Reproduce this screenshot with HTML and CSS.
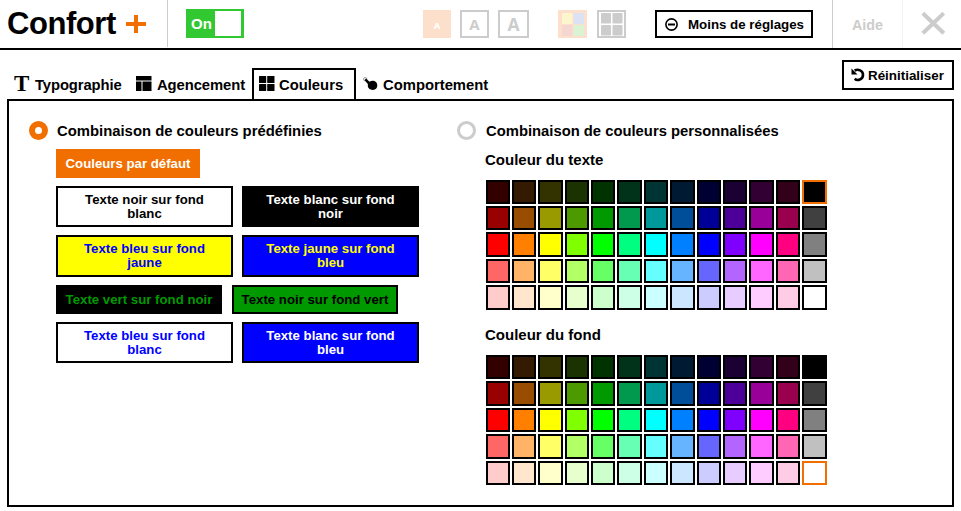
FILE: index.html
```html
<!DOCTYPE html>
<html lang="fr">
<head>
<meta charset="utf-8">
<title>Confort +</title>
<link rel="stylesheet" href="styles.css">
</head>
<body>
<header class="toolbar">
  <div class="brand"><span class="brand-name">Confort</span>
    <svg class="plus" width="20" height="19" viewBox="0 0 20 19"><path d="M0 9h20M10 0v18" stroke="#f16e00" stroke-width="4"/></svg>
  </div>
  <div class="toggle"><span class="toggle-label">On</span><span class="knob"></span></div>
  <div class="sizes">
    <span class="size size-s">A</span><span class="size size-m">A</span><span class="size size-l">A</span>
  </div>
  <div class="themes">
    <svg width="29" height="28" viewBox="0 0 29 28"><path fill="#fde0cc" d="M0 0h29v28H0z"/><rect x="4" y="3" width="10.500" height="11" rx="1" fill="#fdf5cc"/><rect x="15.500" y="3" width="10.500" height="11" rx="1" fill="#dbe2f3"/><rect x="4" y="15" width="10.500" height="11" rx="1" fill="#f5d6d1"/><rect x="15.500" y="15" width="10.500" height="11" rx="1" fill="#d9f3d3"/></svg>
    <svg width="29" height="28" viewBox="0 0 29 28"><path fill="none" stroke="#ccc" stroke-width="2" d="M1 1h27v26H1z"/><g fill="#ccc"><rect x="4" y="3" width="10" height="10.500" rx="1"/><rect x="15.500" y="3" width="10" height="10.500" rx="1"/><rect x="4" y="15" width="10" height="10.500" rx="1"/><rect x="15.500" y="15" width="10" height="10.500" rx="1"/></g></svg>
  </div>
  <button class="less"><svg width="13" height="13" viewBox="0 0 13 13"><circle cx="6.500" cy="6.500" r="5.600" fill="none" stroke="#000" stroke-width="1.600"/><path d="M3 6.500h7" stroke="#000" stroke-width="2"/></svg><span>Moins de réglages</span></button>
  <div class="help">Aide</div>
  <div class="close"><svg width="24" height="24" viewBox="0 0 24 24"><path d="M1.800 2.200l21 20M22.800 2.200l-21 20" stroke="#ccc" stroke-width="4"/></svg></div>
</header>
<nav class="tabs">
  <div class="tab tab-typo"><span class="serif">T</span><span class="t">Typographie</span></div>
  <div class="tab tab-layout"><svg width="16" height="15" viewBox="0 0 16 15"><path d="M0 0h15.500v4.500H0zM0 5.500h5.500V15H0zM6.500 5.500h9V15h-9z"/></svg><span class="t">Agencement</span></div>
  <div class="tab tab-colors"><svg width="16" height="15" viewBox="0 0 16 15"><g><rect width="7.200" height="7" rx=".5"/><rect x="8.200" width="7.300" height="7" rx=".5"/><rect y="8" width="7.200" height="7" rx=".5"/><rect x="8.200" y="8" width="7.300" height="7" rx=".5"/></g></svg><span class="t">Couleurs</span></div>
  <div class="tab tab-behav"><svg width="15" height="14" viewBox="0 0 15 14"><circle cx="2.200" cy="2.200" r="1.700" fill="none" stroke="#999" stroke-width="1"/><path d="M1.500 3L3 1.500l3.500 3.200C8 3.800 11 3.200 13 5c1.700 1.500 1.700 5 .3 6.600-1.600 1.800-5.300 1.700-7 .2C4.800 10.500 4.500 8.500 5 7.200z"/></svg><span class="t">Comportement</span></div>
  <button class="reset"><svg width="14" height="14" viewBox="0 0 14 14"><path d="M3.600 2.500C7 .8 12 2.400 12 6.800c0 5-5.600 6.400-8.300 4" fill="none" stroke="#000" stroke-width="2.600"/><path d="M.5.500v6h6z"/></svg><span>Réinitialiser</span></button>
</nav>
<main class="panel">
  <section class="preset">
    <h2 class="choice"><span class="radio on"></span><span class="choice-label">Combinaison de couleurs prédéfinies</span></h2>
    <div class="combos">
      <div class="row"><button class="combo default">Couleurs par défaut</button></div>
      <div class="row"><button class="combo wide black-white">Texte noir sur fond<br>blanc</button><button class="combo wide white-black">Texte blanc sur fond<br>noir</button></div>
      <div class="row"><button class="combo wide tall blue-yellow">Texte bleu sur fond<br>jaune</button><button class="combo wide tall yellow-blue">Texte jaune sur fond<br>bleu</button></div>
      <div class="row row-green"><button class="combo mid green-black">Texte vert sur fond noir</button><button class="combo mid black-green">Texte noir sur fond vert</button></div>
      <div class="row"><button class="combo wide blue-white">Texte bleu sur fond<br>blanc</button><button class="combo wide white-blue">Texte blanc sur fond<br>bleu</button></div>
    </div>
  </section>
  <section class="custom">
    <h2 class="choice"><span class="radio"></span><span class="choice-label">Combinaison de couleurs personnalisées</span></h2>
    <h3>Couleur du texte</h3>
    <div class="palette palette-text" data-selected="12"></div>
    <h3 class="second">Couleur du fond</h3>
    <div class="palette palette-back" data-selected="64"></div>
  </section>
</main>
<script src="script.js"></script>
</body>
</html>
```
FILE: styles.css
```css
* { box-sizing: border-box; }
body { margin: 0; width: 961px; height: 511px; overflow: hidden; background: #fff; color: #000; font: bold 15px/20px "Liberation Sans", Arial, sans-serif; white-space: nowrap; }
button, h2, h3 { font: inherit; margin: 0; padding: 0; }
button { background: #fff; border: 2px solid #000; color: #000; }
svg { display: block; flex: none; }

.toolbar { display: flex; height: 50px; border-bottom: 2px solid #000; }
.brand { display: flex; width: 168px; height: 47px; border-right: 1px solid #ccc; padding-left: 7px; }
.brand-name { font-size: 31px; line-height: 48px; width: 119px; letter-spacing: -.45px; }
.plus { margin-top: 15px; }
.toggle { display: flex; margin: 9px 0 0 18px; width: 58px; height: 29px; background: #32c832; padding: 2px 3px 2px 5px; color: #fff; }
.toggle-label { width: 24px; line-height: 26px; }
.knob { width: 26px; height: 25px; background: #fff; }
.sizes { display: flex; margin: 10px 0 0 179px; gap: 9px; color: #ccc; font-family: "Open Sans", sans-serif; }
.size { height: 28px; border: 2px solid #ccc; text-align: center; line-height: 24px; }
.size-s { width: 28px; font-size: 9.5px; line-height: 27px; background: #fde0cc; border-color: #fde0cc; color: #fff; }
.size-m { width: 29px; font-size: 15px; }
.size-l { width: 31px; font-size: 17.5px; }
.themes { display: flex; margin: 10px 0 0 29px; gap: 10px; }
.less { display: flex; align-items: center; width: 158px; height: 28px; margin: 10px 0 0 29px; padding-left: 8px; font-size: 13.3px; }
.less span { margin: 2px 0 0 10px; }
.help { width: 71px; height: 48px; margin-left: 19px; padding-left: 19px; border-left: 1px solid #ccc; border-right: 1px solid #f2f2f2; color: #ccc; font-size: 14.3px; line-height: 50px; }
.close { margin: 11px 0 0 18px; }

.tabs { display: flex; height: 51px; margin: 0 7px; padding-top: 10px; }
.tab { display: flex; height: 41px; align-items: flex-start; padding-top: 16px; margin-top: 0; font-size: 14.8px; }
.tab .t { line-height: 19px; }
.tab-typo { width: 129px; padding-left: 7px; }
.tab-typo .t { letter-spacing: -.1px; }
.serif { width: 21px; font: bold 23px/16px "Liberation Serif", serif; }
.tab-layout { width: 116px; }
.tab-layout .t { margin-left: 5px; letter-spacing: -.08px; }
.tab-colors .t { margin-left: 4px; }
.tab-colors { width: 104px; height: 33px; margin-top: 8px; padding: 6px 0 0 5px; border: 2px solid #000; }
.tab-behav { padding-left: 7px; }
.tab-behav svg { margin-top: 1px; }
.tab-behav .t { margin-left: 5px; }
.reset { display: flex; align-items: center; width: 112px; height: 30px; margin-left: auto; padding-left: 7px; font-size: 13.4px; }
.reset span { margin: 2px 0 0 3px; }

.panel { display: flex; width: 947px; height: 408px; margin: -2px 0 0 7px; border: 2px solid #000; }
.preset { width: 448px; padding: 20px 0 0 20px; }
.custom { padding: 20px 0 0 0; }
.choice { display: flex; height: 20px; align-items: flex-start; }
.radio { width: 19px; height: 19px; border: 3px solid #ccc; border-radius: 50%; }
.radio.on { border: 6px solid #f16e00; }
.choice-label { margin-left: 9px; font-size: 14.85px; }
.custom .choice-label { margin-left: 10px; font-size: 14.8px; }
.combos { display: flex; flex-direction: column; gap: 8px; margin: 8px 0 0 27px; }
.row { display: flex; gap: 9px; }
.row-green { gap: 10px; }
.combo { display: flex; align-items: center; justify-content: center; font-size: 13.2px; line-height: 14px; height: 29px; letter-spacing: .02px; }
.default { width: 144px; background: #f16e00; border-color: #f16e00; color: #fff; }
.wide { width: 177px; height: 41px; }
.tall { height: 42px; }
.mid { width: 166px; }
.black-white { background: #fff; color: #000; }
.white-black { background: #000; color: #fff; }
.blue-yellow { background: #ff0; color: #00f; }
.yellow-blue { background: #00f; color: #ff0; }
.green-black { background: #000; color: #090; }
.black-green { background: #090; color: #000; }
.blue-white { background: #fff; color: #00f; }
.white-blue { background: #00f; color: #fff; }

h3 { padding: 9px 0 0 28px; }
.palette { display: grid; gap: 2px; margin: 10px 0 0 29px; grid-template-columns: 24px 24px 25px 24px 24px 25px 24px 25px 24px 24px 25px 24px 25px; }
.palette-text { grid-template-rows: 24px 24px 25px 24px 25px; }
.palette-back { grid-template-rows: 24px 25px 24px 25px 24px; }
h3.second { padding-top: 15px; }
.swatch { border: 2px solid #000; }
.swatch.selected { border-color: #f16e00; }
```
FILE: script.js
```js
// Each palette row has one lightness for twelve hues, then a grey.
const lightness = [10, 30, 50, 70, 90];
const greys = ['#000', '#404040', '#808080', '#c0c0c0', '#fff'];
document.querySelectorAll('.palette').forEach(palette => {
  const selected = Number(palette.dataset.selected);
  for (let i = 0; i < 65; i++) {
    const row = Math.floor(i / 13), column = i % 13;
    const swatch = document.createElement('span');
    swatch.className = 'swatch' + (i === selected ? ' selected' : '');
    swatch.style.backgroundColor = column === 12 ? greys[row] : `hsl(${column * 30}, 100%, ${lightness[row]}%)`;
    palette.append(swatch);
  }
});
```
